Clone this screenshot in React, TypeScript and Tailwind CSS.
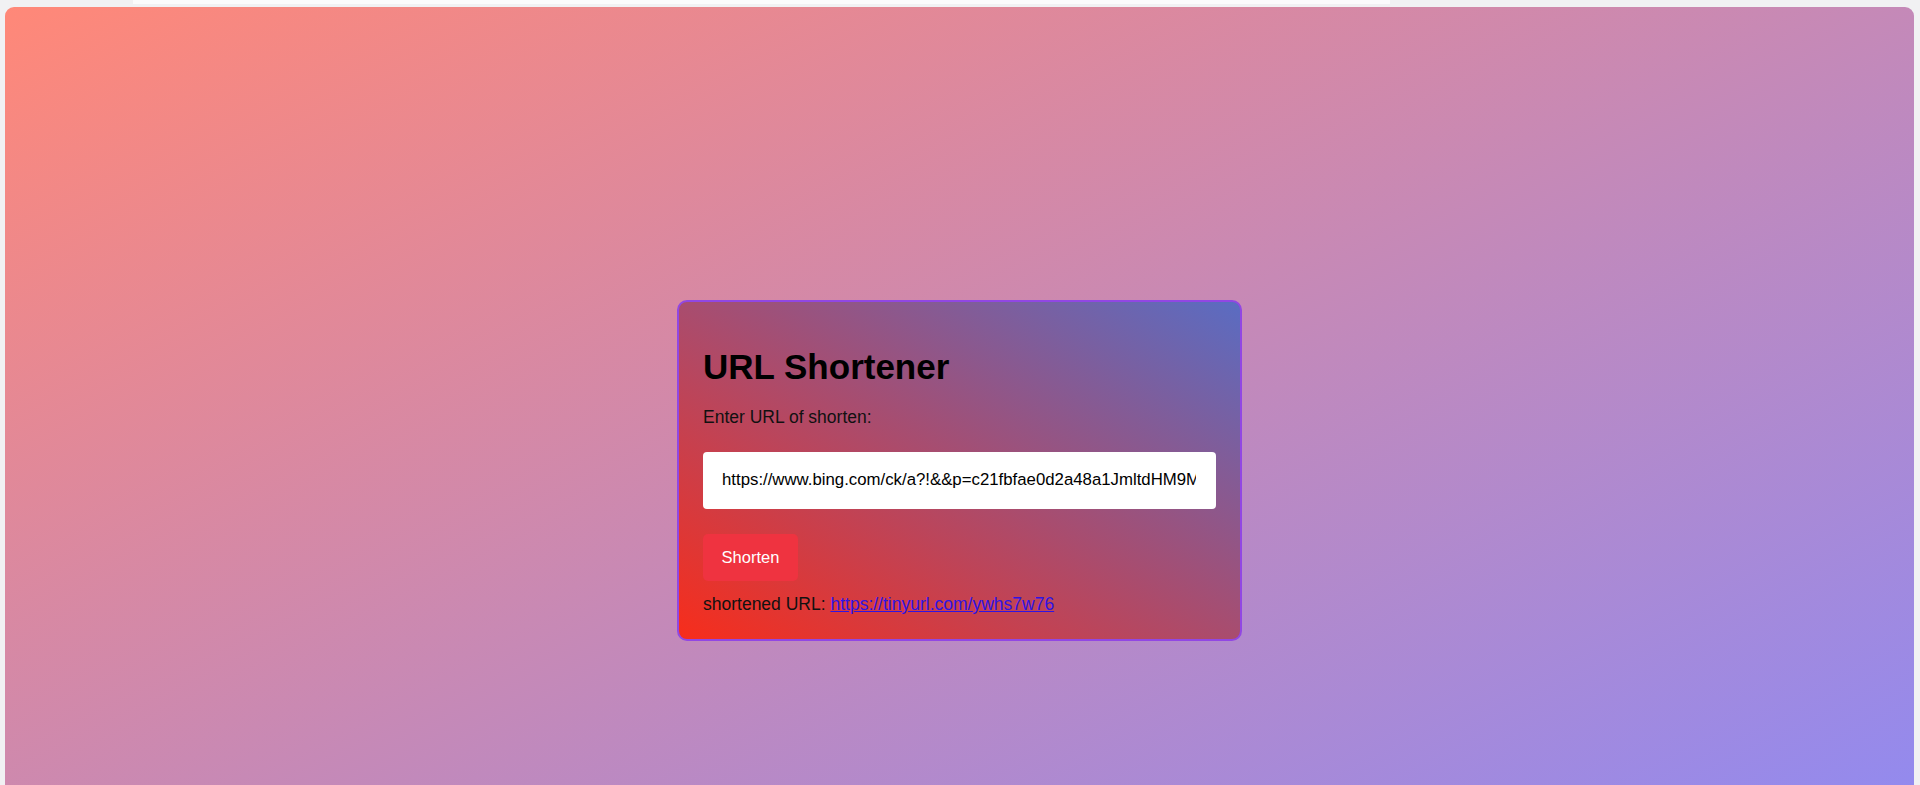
import { useState } from "react";

const LONG_URL =
  "https://www.bing.com/ck/a?!&&p=c21fbfae0d2a48a1JmltdHM9MTcwMDAwMDAwMCZpZ3VpZD0xZjM0";

export default function App() {
  const [url, setUrl] = useState(LONG_URL);

  return (
    <div className="h-[785px] w-full overflow-hidden bg-[#f1f1f3] font-['Liberation_Sans',Arial,sans-serif]">
      {/* top strip */}
      <div className="flex h-[4px]">
        <div className="ml-[133px] w-[1257px] bg-[#fbfbfc]" />
      </div>
      <div className="px-[5px] pt-[3px] pr-[6px]">
        <section className="flex h-[927px] items-center justify-center rounded-[9px] bg-[linear-gradient(to_bottom_right,#ff8878,#8a8af8)]">
          <div className="w-[565px] rounded-[10px] border-2 border-[#9147e3] bg-[linear-gradient(to_top_right,#f72d1b,#5a6cc2)] px-[24px] pt-[46px] pb-[25px] text-black">
            <h1 className="text-[35px] font-bold leading-[38px]">URL Shortener</h1>
            <p className="mt-[21px] text-[17.5px] leading-[20px] text-[#111]">
              Enter URL of shorten:
            </p>
            <input
              value={url}
              onChange={(e) => setUrl(e.target.value)}
              className="mt-[24.5px] block h-[57px] w-[513px] rounded-[4px] bg-white pl-[19px] pr-[20px] text-[16.8px] text-black outline-none"
            />
            <button className="mt-[25px] block h-[47px] w-[95px] rounded-[5px] bg-[#ef3340] text-[16.5px] text-white">
              Shorten
            </button>
            <p className="mt-[13px] text-[17.5px] leading-[20px] text-[#111]">
              shortened URL:{" "}
              <a href="#" className="text-[#2f14e4] underline">
                https://tinyurl.com/ywhs7w76
              </a>
            </p>
          </div>
        </section>
      </div>
    </div>
  );
}
